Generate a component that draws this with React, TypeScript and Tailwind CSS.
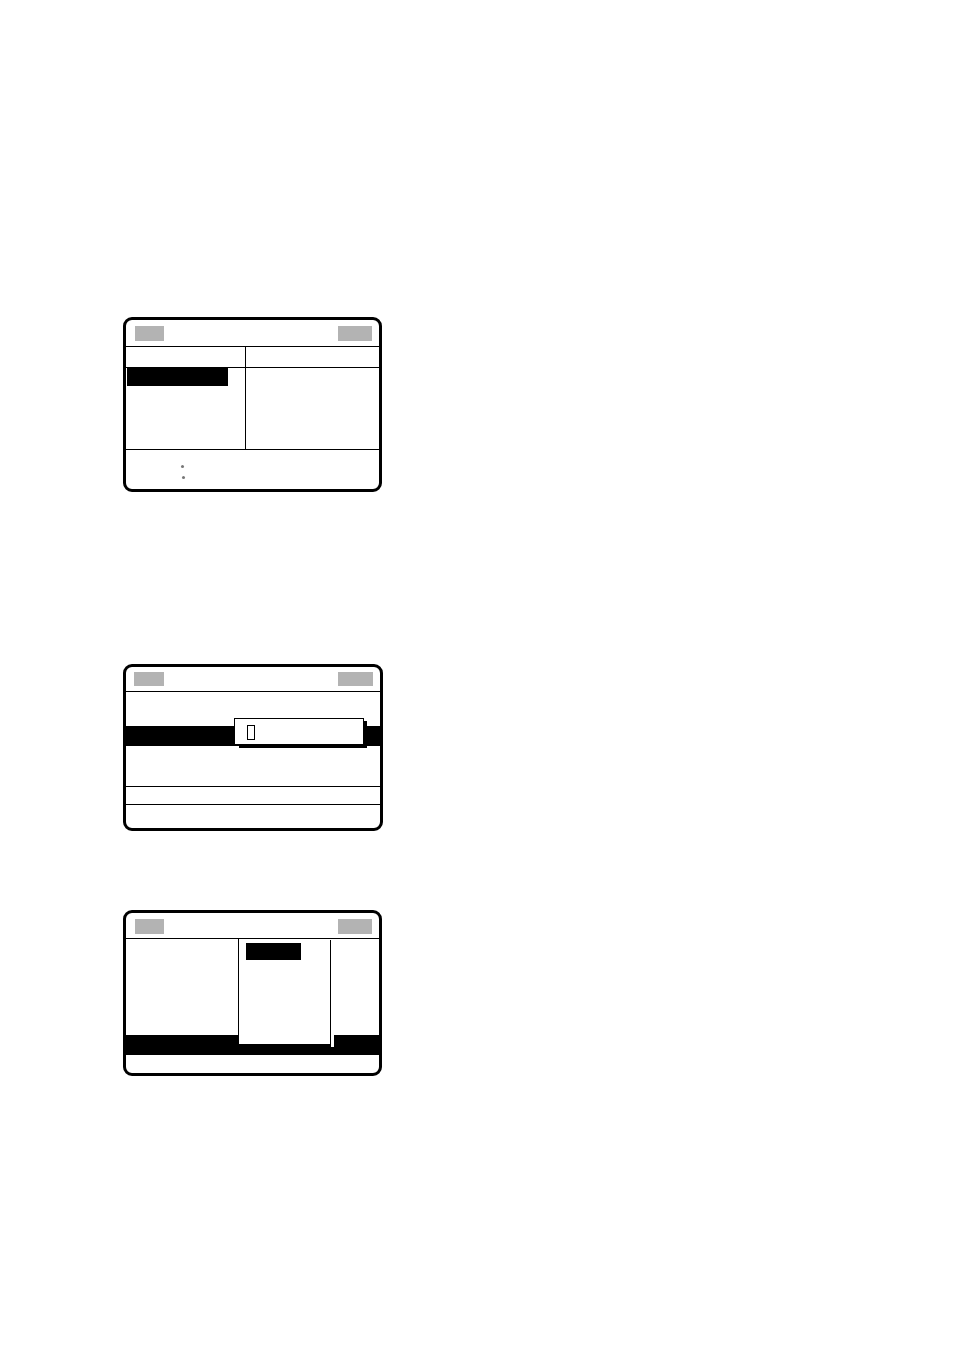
import React from "react";

function Panel1() {
  return (
    <div className="w-[259px] h-[175px] border-[3px] border-black rounded-[9px] flex flex-col bg-white overflow-hidden">
      <div className="h-[26px] flex justify-between items-start pt-[6px] pl-[9px] pr-[7px]">
        <div className="w-[29px] h-[15px] bg-[#b3b3b3]" />
        <div className="w-[34px] h-[15px] bg-[#b3b3b3]" />
      </div>
      <div className="h-px bg-black" />
      <div className="grid grid-cols-[119px_1px_1fr] h-[102px]">
        <div className="flex flex-col">
          <div className="h-[20px]" />
          <div className="h-px bg-black" />
          <div className="pl-px">
            <div className="w-[101px] h-[18px] bg-black" />
          </div>
        </div>
        <div className="bg-black" />
        <div className="flex flex-col">
          <div className="h-[20px]" />
          <div className="h-px bg-black" />
        </div>
      </div>
      <div className="h-px bg-black" />
      <div className="flex-1">
        <div className="pl-[55px] pt-[15px] flex flex-col gap-[8px]">
          <div className="w-[3px] h-[3px] bg-[#777] rounded-full" />
          <div className="w-[3px] h-[3px] bg-[#777] rounded-full ml-[1px]" />
        </div>
      </div>
    </div>
  );
}

function Panel2() {
  return (
    <div className="w-[260px] h-[167px] border-[3px] border-black rounded-[9px] flex flex-col bg-white overflow-hidden">
      <div className="h-[24px] flex justify-between items-start pt-[5px] pl-[8px] pr-[7px]">
        <div className="w-[30px] h-[14px] bg-[#b3b3b3]" />
        <div className="w-[35px] h-[14px] bg-[#b3b3b3]" />
      </div>
      <div className="h-px bg-black" />
      <div className="h-[94px] relative">
        <div className="mt-[34px] h-[20px] bg-black" />
        <div className="absolute left-[113px] top-[29px] w-[128px] h-[27px] bg-black" />
        <div className="absolute left-[108px] top-[26px] w-[130px] h-[27px] bg-white border border-black">
          <div className="ml-[12px] mt-[6px] w-[8px] h-[15px] border border-black" />
        </div>
      </div>
      <div className="h-px bg-black" />
      <div className="h-[17px]" />
      <div className="h-px bg-black" />
      <div className="flex-1" />
    </div>
  );
}

function Panel3() {
  return (
    <div className="w-[259px] h-[166px] border-[3px] border-black rounded-[9px] flex flex-col bg-white overflow-hidden">
      <div className="h-[25px] flex justify-between items-start pt-[6px] pl-[9px] pr-[7px]">
        <div className="w-[29px] h-[15px] bg-[#b3b3b3]" />
        <div className="w-[34px] h-[15px] bg-[#b3b3b3]" />
      </div>
      <div className="h-px bg-black" />
      <div className="flex-1 relative">
        <div className="mt-[96px] h-[20px] bg-black" />
        <div className="absolute left-[112px] top-0 w-[93px] h-[105px] bg-white border-l border-black">
          <div className="ml-[7px] mt-[4px] w-[55px] h-[17px] bg-black" />
        </div>
        <div className="absolute left-[204px] top-px w-px h-[107px] bg-black" />
        <div className="absolute left-[205px] top-px w-[3px] h-[107px] bg-white" />
      </div>
    </div>
  );
}

export default function App() {
  return (
    <div className="w-[954px] h-[1350px] bg-white pl-[123px] pt-[317px] flex flex-col">
      <Panel1 />
      <div className="h-[172px]" />
      <Panel2 />
      <div className="h-[79px]" />
      <Panel3 />
    </div>
  );
}
